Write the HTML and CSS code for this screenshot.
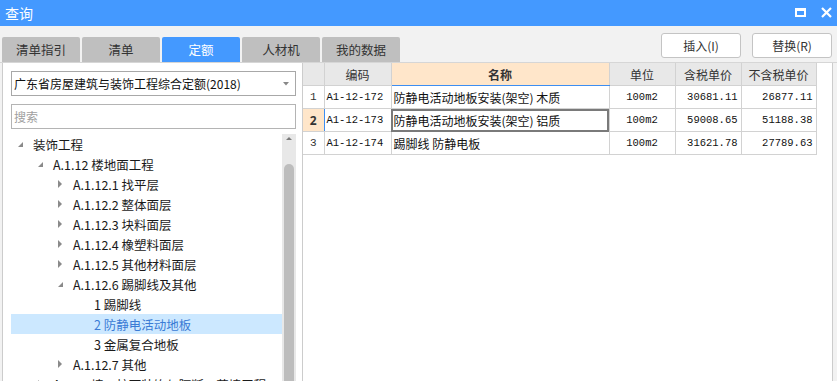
FILE: index.html
```html
<!DOCTYPE html>
<html>
<head>
    <meta charset="utf-8">
    <title>查询</title>
    <link rel="stylesheet" href="styles.css">
</head>
<body>
<div class="window">
    <div class="titlebar">
        <span class="title">查询</span>
        <div class="win-btns">
            <svg width="11" height="9" viewBox="0 0 11 9"><rect x="1" y="1.5" width="9" height="6.5" fill="none" stroke="#fff" stroke-width="2"/><rect x="0" y="0" width="11" height="3" fill="#fff"/></svg>
            <svg width="11" height="11" viewBox="0 0 11 11"><path d="M1 1 L10 10 M10 1 L1 10" stroke="#fff" stroke-width="2.2"/></svg>
        </div>
    </div>

    <div class="toolbar">
        <div class="tabs">
            <div class="tab">清单指引</div>
            <div class="tab">清单</div>
            <div class="tab active">定额</div>
            <div class="tab">人材机</div>
            <div class="tab">我的数据</div>
        </div>
        <div class="actions">
            <button class="btn">插入(I)</button>
            <button class="btn">替换(R)</button>
        </div>
    </div>

    <div class="content">
        <div class="left-panel">
            <div class="select">
                <span>广东省房屋建筑与装饰工程综合定额(2018)</span>
                <svg width="6" height="4" viewBox="0 0 6 4"><path d="M0 0 H6 L3 3.5 Z" fill="#888"/></svg>
            </div>
            <div class="search">搜索</div>
            <div class="tree-wrap">
                <div class="tree">
                    <div class="node lv0"><span class="tw open"></span>装饰工程</div>
                    <div class="node lv1"><span class="tw open"></span>A.1.12 楼地面工程</div>
                    <div class="node lv2"><span class="tw closed"></span>A.1.12.1 找平层</div>
                    <div class="node lv2"><span class="tw closed"></span>A.1.12.2 整体面层</div>
                    <div class="node lv2"><span class="tw closed"></span>A.1.12.3 块料面层</div>
                    <div class="node lv2"><span class="tw closed"></span>A.1.12.4 橡塑料面层</div>
                    <div class="node lv2"><span class="tw closed"></span>A.1.12.5 其他材料面层</div>
                    <div class="node lv2"><span class="tw open"></span>A.1.12.6 踢脚线及其他</div>
                    <div class="node lv3"><span class="tw"></span>1 踢脚线</div>
                    <div class="node lv3 selected"><span class="tw"></span>2 防静电活动地板</div>
                    <div class="node lv3"><span class="tw"></span>3 金属复合地板</div>
                    <div class="node lv2"><span class="tw closed"></span>A.1.12.7 其他</div>
                    <div class="node lv1"><span class="tw closed"></span>A.1.13 墙、柱面装饰与隔断、幕墙工程</div>
                </div>
                <div class="scrollbar">
                    <div class="sb-arrow"></div>
                    <div class="sb-thumb"></div>
                </div>
            </div>
        </div>

        <div class="right-panel">
            <table class="grid">
                <colgroup>
                    <col style="width:21px">
                    <col style="width:67px">
                    <col style="width:218px">
                    <col style="width:66px">
                    <col style="width:66px">
                    <col style="width:75px">
                </colgroup>
                <thead>
                <tr>
                    <th></th>
                    <th>编码</th>
                    <th class="name-head">名称</th>
                    <th>单位</th>
                    <th>含税单价</th>
                    <th>不含税单价</th>
                </tr>
                </thead>
                <tbody>
                <tr>
                    <td class="num">1</td>
                    <td class="code">A1-12-172</td>
                    <td class="name">防静电活动地板安装(架空) 木质</td>
                    <td class="unit">100m2</td>
                    <td class="price">30681.11</td>
                    <td class="price">26877.11</td>
                </tr>
                <tr class="current">
                    <td class="num">2</td>
                    <td class="code">A1-12-173</td>
                    <td class="name focus">防静电活动地板安装(架空) 铝质</td>
                    <td class="unit">100m2</td>
                    <td class="price">59008.65</td>
                    <td class="price">51188.38</td>
                </tr>
                <tr>
                    <td class="num">3</td>
                    <td class="code">A1-12-174</td>
                    <td class="name">踢脚线 防静电板</td>
                    <td class="unit">100m2</td>
                    <td class="price">31621.78</td>
                    <td class="price">27789.63</td>
                </tr>
                </tbody>
            </table>
        </div>
    </div>
</div>
</body>
</html>
```

FILE: styles.css
```css
body {
    margin: 0;
    background-color: #F2F2F2;
    font-family: "Noto Sans CJK SC", "Noto Sans", sans-serif;
    font-size: 12px;
    color: #222;
    overflow: hidden;
}

.window {
    width: 837px;
    height: 381px;
    display: flex;
    flex-direction: column;
}

.titlebar {
    height: 26px;
    background-color: #4499FF;
    display: flex;
    align-items: center;
    justify-content: space-between;
    padding: 0 5px 0 5px;
    flex-shrink: 0;
}

.title {
    color: white;
    font-size: 14px;
}

.win-btns {
    display: flex;
    align-items: center;
    gap: 15px;
    margin-top: -2px;
}

.toolbar {
    height: 36px;
    display: flex;
    flex-shrink: 0;
}

.tabs {
    display: flex;
    align-items: flex-end;
    gap: 2px;
    padding-left: 2px;
}

.tab {
    width: 78px;
    height: 25px;
    line-height: 25px;
    text-align: center;
    background-color: #BFBFBF;
    color: #333;
    font-size: 12.5px;
    border-radius: 2px 2px 0 0;
}

.tab.active {
    background-color: #4499FF;
    color: white;
}

.actions {
    margin-left: auto;
    margin-right: 5px;
    margin-top: 7px;
    display: flex;
    gap: 11px;
}

.btn {
    width: 80px;
    height: 25px;
    background-color: white;
    border: 1px solid #C4C4C4;
    border-radius: 3px;
    font-family: inherit;
    font-size: 12px;
    color: #333;
    padding: 0;
}

.content {
    flex: 1;
    display: flex;
    padding-left: 2px;
    min-height: 0;
    border-top: 1px solid #D6D6D6;
}

.left-panel {
    box-sizing: border-box;
    width: 301px;
    flex-shrink: 0;
    background-color: white;
    border-left: 1px solid #CCCCCC;
    border-right: 1px solid #CCCCCC;
    padding: 8px 0 0 8px;
    display: flex;
    flex-direction: column;
}

.select {
    box-sizing: border-box;
    width: 285px;
    height: 25px;
    border: 1px solid #A8A8A8;
    display: flex;
    align-items: center;
    justify-content: space-between;
    padding: 0 6px 0 2px;
    color: #111;
}

.search {
    margin-top: 8px;
    width: 285px;
    height: 25px;
    box-sizing: border-box;
    border: 1px solid #B4B4B4;
    padding-left: 2px;
    line-height: 23px;
    color: #A0A0A0;
}

.tree-wrap {
    margin-top: 5px;
    flex: 1;
    display: flex;
    min-height: 0;
}

.tree {
    width: 271px;
}

.node {
    height: 20px;
    display: flex;
    align-items: center;
    white-space: nowrap;
    color: #1A1A1A;
    font-size: 12.5px;
}

.node.lv0 { padding-left: 4px; }
.node.lv1 { padding-left: 24px; }
.node.lv2 { padding-left: 44px; }
.node.lv3 { padding-left: 65px; }

.node.selected {
    background-color: #CCE8FF;
    color: #3A7BD5;
}

.tw {
    width: 10px;
    height: 10px;
    margin-right: 8px;
    position: relative;
    flex-shrink: 0;
}

.tw.open::after {
    content: "";
    position: absolute;
    left: 3px;
    top: 3px;
    border-style: solid;
    border-width: 0 0 5px 5px;
    border-color: transparent transparent #8A8A8A transparent;
}

.tw.closed::after {
    content: "";
    position: absolute;
    left: 3px;
    top: 1px;
    border-style: solid;
    border-width: 4px 0 4px 4px;
    border-color: transparent transparent transparent #8A8A8A;
}

.scrollbar {
    width: 14px;
    background-color: #E8E8E8;
    display: flex;
    flex-direction: column;
    align-items: center;
}

.sb-arrow {
    margin-top: 3px;
    width: 0;
    height: 0;
    border-style: solid;
    border-width: 0 3px 3px 3px;
    border-color: transparent transparent #7A7A7A transparent;
}

.sb-thumb {
    margin-top: 24px;
    width: 10px;
    flex: 1;
    background-color: #BDBDBD;
    border-radius: 5px 5px 0 0;
}

.right-panel {
    box-sizing: border-box;
    width: 530px;
    flex-shrink: 0;
    background-color: white;
    border-right: 1px solid #CCCCCC;
}

.grid {
    border-collapse: collapse;
    table-layout: fixed;
    width: 513px;
}

.grid th,
.grid td {
    border: 1px solid #D2D2D2;
    height: 22px;
    padding: 0 2px;
    white-space: nowrap;
    overflow: hidden;
}

.grid th {
    background-color: #E8E8E8;
    font-weight: normal;
    color: #333;
    text-align: center;
    border-top: none;
}

.grid th:first-child,
.grid td:first-child {
    border-left: none;
}

.grid th.name-head {
    background-color: #FFE6CA;
    font-weight: bold;
    border-bottom: 1px solid #3D8EF2;
}

.grid .num {
    text-align: center;
    font-family: "Liberation Mono", monospace;
    font-size: 11px;
    color: #333;
}

.grid .code,
.grid .unit,
.grid .price {
    font-family: "Liberation Mono", monospace;
    font-size: 10.5px;
    color: #111;
}

.grid .unit {
    text-align: center;
}

.grid .price {
    text-align: right;
    padding-right: 3px;
}

.grid .name {
    color: #111;
}

.grid tr.current .num {
    background-color: #FFE6CA;
    font-weight: bold;
    font-family: "Noto Sans", sans-serif;
    font-size: 12px;
    border-right: 1px solid #3D8EF2;
}

.grid td.focus {
    outline: 2px solid #7A7A7A;
    outline-offset: -2px;
}
```
